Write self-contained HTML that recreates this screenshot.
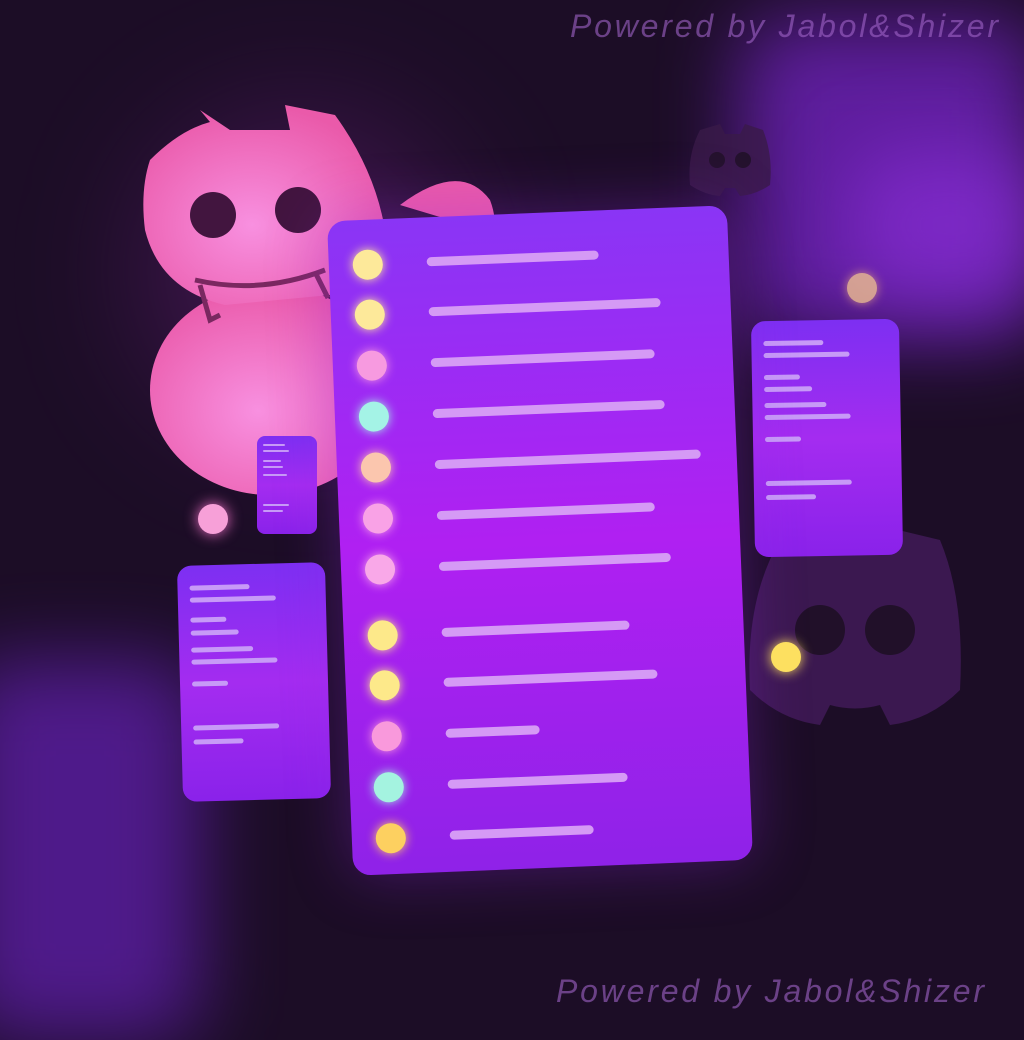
<!DOCTYPE html>
<html><head><meta charset="utf-8"><style>
html,body{margin:0;padding:0}
body{width:1024px;height:1024px;overflow:hidden;position:relative;background:#1c0d26;font-family:"Liberation Sans",sans-serif}
.abs{position:absolute}
.blob{position:absolute;filter:blur(40px);border-radius:40px}
.txt{position:absolute;font-style:italic;color:rgba(160,100,200,0.6);font-size:32px;letter-spacing:2.8px}
.card{position:absolute;border-radius:14px;background:linear-gradient(180deg,#7d2ff2,#a42cf0 50%,#8a22ea)}
.main{position:absolute;left:340px;top:213px;width:400px;height:655px;transform:rotate(-2.3deg);border-radius:18px;background:linear-gradient(180deg,#8a35f5 0%,#b020f2 50%,#8f22e8 100%);box-shadow:0 0 60px rgba(150,40,230,0.35)}
.row{position:absolute;left:24px;height:30px}
.dot{position:absolute;left:0;top:0;width:30px;height:30px;border-radius:50%}
.line{position:absolute;left:74px;top:10px;height:9px;border-radius:5px;background:#d59af5}
.sl{position:absolute;height:5px;border-radius:3px;background:#c79af7}
</style></head><body>
<div class="blob" style="left:740px;top:20px;width:300px;height:320px;background:#7a25d0;opacity:.7"></div>
<div class="blob" style="left:850px;top:150px;width:200px;height:150px;background:#9030e0;opacity:.6"></div>
<div class="blob" style="left:-40px;top:660px;width:240px;height:380px;background:#6a22c0;opacity:.65"></div>
<div class="blob" style="left:150px;top:120px;width:300px;height:300px;background:#8a2aa0;opacity:.35;border-radius:50%;filter:blur(70px)"></div>

<!-- dark discord right -->
<svg class="abs" style="left:740px;top:520px" width="230" height="220" viewBox="0 0 230 220">
<path d="M40 20 L90 8 L100 30 L140 30 L150 8 L200 20 Q225 80 220 170 Q190 200 150 205 L140 185 Q115 192 90 185 L80 205 Q40 200 10 170 Q5 80 40 20Z" fill="#3b1850"/>
<circle cx="80" cy="110" r="25" fill="#211029"/><circle cx="150" cy="110" r="25" fill="#211029"/>
</svg>
<svg class="abs" style="left:685px;top:120px" width="90" height="80" viewBox="0 0 90 80"><path d="M15 10 L35 4 L40 14 L55 14 L60 4 L78 10 Q88 35 85 65 Q70 75 55 76 L50 68 L40 68 L35 76 Q20 75 5 65 Q2 35 15 10Z" fill="#3a1a48" opacity=".8"/><circle cx="32" cy="40" r="8" fill="#24122d"/><circle cx="58" cy="40" r="8" fill="#24122d"/></svg>

<!-- pink mascot -->
<svg class="abs" style="left:130px;top:100px" width="390" height="400" viewBox="0 0 390 400">
<defs><radialGradient id="pg" cx="0.45" cy="0.6" r="0.6"><stop offset="0" stop-color="#f890e0"/><stop offset="1" stop-color="#ea5aaa"/></radialGradient></defs>
<ellipse cx="140" cy="290" rx="120" ry="105" fill="url(#pg)"/>
<path d="M20 60 Q50 30 80 22 L70 10 L100 30 L160 30 L155 5 L205 15 Q245 70 255 130 Q250 180 200 195 L95 205 Q30 190 15 130 Q10 90 20 60Z" fill="url(#pg)"/>
<circle cx="83" cy="115" r="23" fill="#42153f"/><circle cx="168" cy="110" r="23" fill="#42153f"/>
<path d="M65 180 Q130 195 195 170 M70 185 L80 220 L90 215 M185 172 L198 198" stroke="#7a2860" stroke-width="5" fill="none"/>
<path d="M270 105 Q330 60 360 100 Q375 140 340 145 L320 120 Z" fill="#ea5aaa"/>
</svg>

<!-- small card tiny -->
<div class="card" style="left:257px;top:436px;width:60px;height:98px;border-radius:8px">
<div class="sl" style="left:6px;top:8px;width:22px;height:2px"></div><div class="sl" style="left:6px;top:14px;width:26px;height:2px"></div><div class="sl" style="left:6px;top:24px;width:18px;height:2px"></div><div class="sl" style="left:6px;top:30px;width:20px;height:2px"></div><div class="sl" style="left:6px;top:38px;width:24px;height:2px"></div><div class="sl" style="left:6px;top:68px;width:26px;height:2px"></div><div class="sl" style="left:6px;top:74px;width:20px;height:2px"></div>
</div>
<!-- left card -->
<div class="card" style="left:180px;top:564px;width:148px;height:236px;transform:rotate(-1.5deg)">
<div class="sl" style="left:12px;top:20px;width:60px"></div><div class="sl" style="left:12px;top:32px;width:86px"></div><div class="sl" style="left:12px;top:52px;width:36px"></div><div class="sl" style="left:12px;top:65px;width:48px"></div><div class="sl" style="left:12px;top:82px;width:62px"></div><div class="sl" style="left:12px;top:94px;width:86px"></div><div class="sl" style="left:12px;top:116px;width:36px"></div><div class="sl" style="left:12px;top:160px;width:86px"></div><div class="sl" style="left:12px;top:174px;width:50px"></div>
</div>
<!-- right card -->
<div class="card" style="left:753px;top:320px;width:148px;height:236px;transform:rotate(-1deg)">
<div class="sl" style="left:12px;top:20px;width:60px"></div><div class="sl" style="left:12px;top:32px;width:86px"></div><div class="sl" style="left:12px;top:54px;width:36px"></div><div class="sl" style="left:12px;top:66px;width:48px"></div><div class="sl" style="left:12px;top:82px;width:62px"></div><div class="sl" style="left:12px;top:94px;width:86px"></div><div class="sl" style="left:12px;top:116px;width:36px"></div><div class="sl" style="left:12px;top:160px;width:86px"></div><div class="sl" style="left:12px;top:174px;width:50px"></div>
</div>

<!-- main card -->
<div class="main">
<div class="row" style="top:30px"><div class="dot" style="background:#fde99a;box-shadow:0 0 10px #fde99a"></div><div class="line" style="width:172px"></div></div>
<div class="row" style="top:80px"><div class="dot" style="background:#fde99a;box-shadow:0 0 10px #fde99a"></div><div class="line" style="width:232px"></div></div>
<div class="row" style="top:131px"><div class="dot" style="background:#f79ae0;box-shadow:0 0 10px #f79ae0"></div><div class="line" style="width:224px"></div></div>
<div class="row" style="top:182px"><div class="dot" style="background:#a4f3e6;box-shadow:0 0 10px #a4f3e6"></div><div class="line" style="width:232px"></div></div>
<div class="row" style="top:233px"><div class="dot" style="background:#fbc6ae;box-shadow:0 0 10px #fbc6ae"></div><div class="line" style="width:266px"></div></div>
<div class="row" style="top:284px"><div class="dot" style="background:#f9a2e6;box-shadow:0 0 10px #f9a2e6"></div><div class="line" style="width:218px"></div></div>
<div class="row" style="top:335px"><div class="dot" style="background:#f9a8e8;box-shadow:0 0 10px #f9a8e8"></div><div class="line" style="width:232px"></div></div>
<div class="row" style="top:401px"><div class="dot" style="background:#fde98a;box-shadow:0 0 10px #fde98a"></div><div class="line" style="width:188px"></div></div>
<div class="row" style="top:451px"><div class="dot" style="background:#fde98a;box-shadow:0 0 10px #fde98a"></div><div class="line" style="width:214px"></div></div>
<div class="row" style="top:502px"><div class="dot" style="background:#f999dc;box-shadow:0 0 10px #f999dc"></div><div class="line" style="width:94px"></div></div>
<div class="row" style="top:553px"><div class="dot" style="background:#a4f3e0;box-shadow:0 0 10px #a4f3e0"></div><div class="line" style="width:180px"></div></div>
<div class="row" style="top:604px"><div class="dot" style="background:#fdd060;box-shadow:0 0 10px #fdd060"></div><div class="line" style="width:144px"></div></div>
</div>

<!-- loose dots -->
<div class="abs" style="left:198px;top:504px;width:30px;height:30px;border-radius:50%;background:#f7a0d8;box-shadow:0 0 14px #f070c8"></div>
<div class="abs" style="left:847px;top:273px;width:30px;height:30px;border-radius:50%;background:#f0c090;opacity:.8;box-shadow:0 0 10px #e0a080"></div>
<div class="abs" style="left:771px;top:642px;width:30px;height:30px;border-radius:50%;background:#fde060;box-shadow:0 0 12px #fde060"></div>

<div class="txt" style="left:570px;top:8px">Powered by Jabol&amp;Shizer</div>
<div class="txt" style="left:556px;top:973px">Powered by Jabol&amp;Shizer</div>
</body></html>
